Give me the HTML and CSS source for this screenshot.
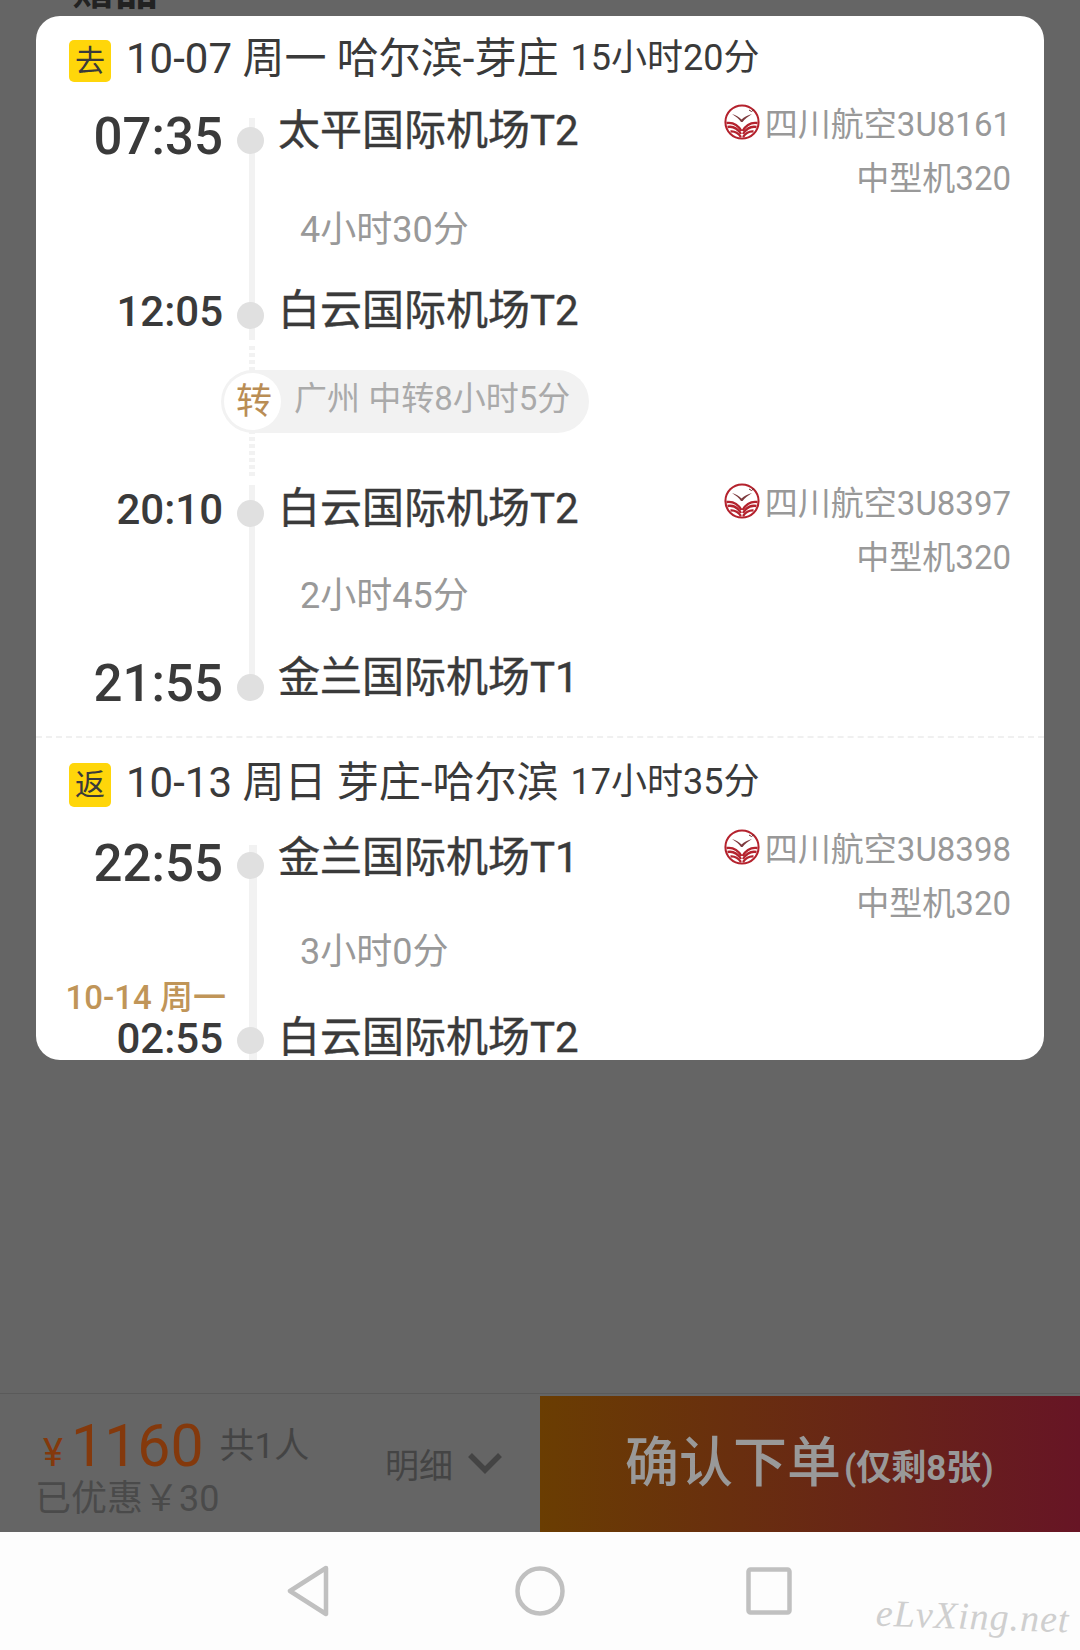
FILE: index.html
```html
<!DOCTYPE html>
<html lang="zh-CN">
<head>
<meta charset="utf-8">
<title>确认订单</title>
<link rel="stylesheet" href="styles.css">
</head>
<body>
<svg class="defs" width="0" height="0" aria-hidden="true">
  <symbol id="sichuan" viewBox="0 0 36 36">
    <circle cx="18" cy="18" r="16.600" fill="#fff" stroke="#b4222d" stroke-width="2"/>
    <g fill="none" stroke="#b4222d" stroke-width="2.300">
      <path d="M2.500 19C9 18 14 21 17.500 27"/>
      <path d="M33.500 19C27 18 22 21 18.500 27"/>
      <path d="M3.500 23C9 22 14 25 17 30"/>
      <path d="M32.500 23C27 22 22 25 19 30"/>
      <path d="M6.500 27.500C11 27 14 29 17 33"/>
      <path d="M29.500 27.500C25 27 22 29 19 33"/>
    </g>
    <path d="M8 10C12 11 15 13 17.500 15.500C20 13 24 11 28 10C24 12.500 21 15 18.500 18L17 18C15 15 12 12.500 8 10Z" fill="#7d3a3e"/>
    <path d="M25 6L27.500 7.500L30 5.500" fill="none" stroke="#6e2a2e" stroke-width="1"/>
  </symbol>
</svg>
<div class="behind"><span class="behind-text">赠品</span></div>

<main class="card">
  <header class="trip-head">
    <span class="trip-badge">去</span>
    <span class="trip-title">10-07 周一 哈尔滨-芽庄</span>
    <span class="trip-total">15小时20分</span>
  </header>

  <section class="leg leg-first">
    <div class="leg-main">
      <div class="stop stop-big"><span class="time">07:35</span><span class="dot"></span><span class="airport">太平国际机场T2</span></div>
      <div class="duration duration-low">4小时30分</div>
      <div class="stop"><span class="time">12:05</span><span class="dot"></span><span class="airport">白云国际机场T2</span></div>
    </div>
    <div class="carrier">
      <div class="carrier-line"><svg class="logo"><use href="#sichuan"/></svg>四川航空3U8161</div>
      <div class="carrier-line">中型机320</div>
    </div>
  </section>

  <div class="transfer">
    <div class="pill"><span class="pill-mark">转</span><span class="pill-text">广州 中转8小时5分</span></div>
  </div>

  <section class="leg leg-second">
    <div class="leg-main">
      <div class="stop"><span class="time">20:10</span><span class="dot"></span><span class="airport">白云国际机场T2</span></div>
      <div class="duration">2小时45分</div>
      <div class="stop stop-big"><span class="time">21:55</span><span class="dot"></span><span class="airport">金兰国际机场T1</span></div>
    </div>
    <div class="carrier">
      <div class="carrier-line"><svg class="logo"><use href="#sichuan"/></svg>四川航空3U8397</div>
      <div class="carrier-line">中型机320</div>
    </div>
  </section>

  <div class="divider"></div>

  <header class="trip-head trip-head-return">
    <span class="trip-badge trip-badge-tall">返</span>
    <span class="trip-title">10-13 周日 芽庄-哈尔滨</span>
    <span class="trip-total">17小时35分</span>
  </header>

  <section class="leg leg-first leg-return">
    <div class="leg-main">
      <div class="stop stop-big"><span class="time">22:55</span><span class="dot"></span><span class="airport">金兰国际机场T1</span></div>
      <div class="duration duration-high">3小时0分</div>
      <div class="stop"><span class="time">02:55<span class="next-day">10-14 周一</span></span><span class="dot"></span><span class="airport">白云国际机场T2</span></div>
    </div>
    <div class="carrier">
      <div class="carrier-line"><svg class="logo"><use href="#sichuan"/></svg>四川航空3U8398</div>
      <div class="carrier-line">中型机320</div>
    </div>
  </section>
</main>

<div class="spacer"></div>

<footer class="order-bar">
  <div class="price-box">
    <div class="price-line"><span class="yen">¥</span><span class="amount">1160</span><span class="people">共1人</span></div>
    <div class="discount">已优惠￥30</div>
  </div>
  <div class="detail">明细
    <svg class="chevron" viewBox="0 0 36 22"><path d="M3 3L18 18L33 3" fill="none" stroke="#444" stroke-width="5.500"/></svg>
  </div>
  <div class="submit"><span class="submit-main">确认下单</span><span class="submit-sub">(仅剩8张)</span></div>
</footer>

<nav class="system-nav">
  <svg class="nav-back" viewBox="0 0 44 52"><path d="M40 3L4 26L40 49Z" fill="none" stroke="#c0c0c0" stroke-width="4.500" stroke-linejoin="round"/></svg>
  <svg class="nav-home" viewBox="0 0 50 50"><circle cx="25" cy="25" r="22.500" fill="none" stroke="#c0c0c0" stroke-width="4.500"/></svg>
  <svg class="nav-recent" viewBox="0 0 46 48"><rect x="2.500" y="2.500" width="41" height="43" rx="2" fill="none" stroke="#c0c0c0" stroke-width="4.500"/></svg>
  <span class="watermark">eLvXing.net</span>
</nav>
</body>
</html>
```

FILE: styles.css
```css
* { box-sizing: border-box; }
html, body { margin: 0; padding: 0; }
body {
  width: 1080px;
  height: 1650px;
  overflow: hidden;
  display: flex;
  flex-direction: column;
  background: #656565;
  color: #3a3a3a;
  font-family: Roboto, "Noto Sans CJK SC", sans-serif;
}
.defs { position: absolute; }

.behind {
  height: 16px;
  flex: none;
  overflow: hidden;
  display: flex;
  align-items: flex-end;
  padding: 0 0 5px 72px;
}
.behind-text { font-size: 43px; line-height: 42px; font-weight: 700; color: #222; }

.card {
  flex: none;
  height: 1044px;
  margin: 0 36px;
  background: #fff;
  border-radius: 24px;
  overflow: hidden;
}

.trip-head {
  display: flex;
  align-items: center;
  height: 42px;
  margin: 24px 0 23px;
  padding-left: 33px;
  white-space: nowrap;
}
.trip-head-return { height: 44px; margin: 25px 0 25px; }
.trip-badge {
  width: 42px;
  height: 42px;
  flex: none;
  display: flex;
  align-items: center;
  justify-content: center;
  margin-right: 15px;
  background: #ffd60a;
  border-radius: 5px;
  font-size: 30px;
  line-height: 1;
}
.trip-badge-tall { height: 44px; }
.trip-title { font-size: 42px; line-height: 42px; padding-bottom: 4px; }
.trip-total { font-size: 36px; line-height: 42px; margin-left: 12px; padding-bottom: 6px; }

.leg { display: flex; justify-content: space-between; padding-right: 33px; }
.leg-main { position: relative; flex: none; width: 560px; }
.leg-main::before {
  content: "";
  position: absolute;
  left: 213px;
  width: 6px;
  top: 7px;
  bottom: 22px;
  background: #f2f2f2;
}
.leg-first .leg-main::before { top: 13px; bottom: 0; }
.leg-return .leg-main::before { width: 8px; }

.stop {
  position: relative;
  display: grid;
  grid-template-columns: 187px 55px 1fr;
  align-items: center;
  height: 60px;
}
.time {
  position: relative;
  margin-top: 2px;
  text-align: right;
  font-size: 42px;
  line-height: 60px;
  font-weight: 500;
  white-space: nowrap;
}
.stop-big .time { font-size: 51px; }
.next-day {
  position: absolute;
  right: -3px;
  top: -31px;
  font-size: 33px;
  line-height: 40px;
  font-weight: 500;
  color: #c09558;
}
.dot {
  width: 27px;
  height: 27px;
  margin: 8px 0 0 14px;
  border-radius: 50%;
  background: #e0e0e0;
}
.leg-return .dot { margin-top: 4px; }
.airport {
  font-size: 42px;
  line-height: 50px;
  margin-top: 0;
  white-space: nowrap;
  -webkit-text-stroke: 0.4px #3a3a3a;
}
.stop-big .airport { margin: 0 0 11px; }

.duration {
  position: relative;
  display: flex;
  align-items: center;
  height: 114px;
  padding: 0 0 6px 264px;
  font-size: 36px;
  color: #999;
}
.duration-low { height: 115px; padding: 6px 0 0 264px; }
.duration-high { height: 115px; padding: 0 0 3px 264px; }

.transfer { position: relative; padding: 30px 0 45px; }
.transfer::before {
  content: "";
  position: absolute;
  left: 213px;
  width: 6px;
  top: 6px;
  bottom: 0;
  background: repeating-linear-gradient(#f2f2f2 0 4px, transparent 4px 7px);
}
.pill {
  position: relative;
  display: inline-flex;
  align-items: center;
  height: 63px;
  margin-left: 185px;
  padding: 0 19px 0 3px;
  border-radius: 32px;
  background: #f2f2f2;
}
.pill-mark {
  width: 57px;
  height: 57px;
  display: flex;
  align-items: center;
  justify-content: center;
  padding-left: 3px;
  margin-right: 13px;
  border-radius: 50%;
  background: #fff;
  color: #b98d55;
  font-size: 36px;
  line-height: 1;
}
.pill-text { font-size: 33px; line-height: 1; padding-bottom: 6px; color: #aaa; white-space: nowrap; }

.carrier { margin-top: -10px; text-align: right; color: #999; }
.leg-second .carrier { margin-top: -4px; }
.leg-return .carrier { margin-top: -12px; }
.carrier-line {
  display: flex;
  align-items: center;
  justify-content: flex-end;
  height: 54px;
  font-size: 33px;
  white-space: nowrap;
}
.logo { width: 36px; height: 36px; margin-right: 5px; }

.divider { margin-top: 24px; border-top: 2px dashed #f0f0f0; height: 0; }

.spacer { flex: 1; }

.order-bar {
  flex: none;
  display: flex;
  height: 139px;
  border-top: 1px solid #5a5a5a;
}
.price-box { width: 346px; padding: 22px 0 0 35px; color: #4a4a4a; }
.price-line { display: flex; align-items: baseline; height: 60px; line-height: 60px; }
.yen { font-size: 38px; color: #84390c; margin: 0 8px 0 8px; }
.amount { font-size: 59px; color: #84390c; }
.people { font-size: 35px; margin-left: 16px; position: relative; top: -8px; color: #444; }
.discount { font-size: 36px; line-height: 46px; margin-top: 0; }
.detail {
  width: 194px;
  display: flex;
  align-items: center;
  gap: 14px;
  padding: 0 0 0 39px;
  font-size: 34px;
  color: #444;
}
.chevron { width: 36px; height: 22px; }
.submit {
  flex: 1;
  margin-top: 2px;
  display: flex;
  align-items: center;
  padding: 0 0 12px 85px;
  background: linear-gradient(90deg, #6a3d02, #671525);
  color: #999;
  white-space: nowrap;
}
.submit-main { font-size: 54px; font-weight: 500; }
.submit-sub { font-size: 35px; font-weight: 700; margin-top: 12px; margin-left: 3px; }

.system-nav {
  position: relative;
  flex: none;
  height: 118px;
  display: flex;
  align-items: center;
  justify-content: flex-start;
  padding-left: 286px;
  background: #fdfdfd;
}
.nav-back { width: 44px; height: 52px; }
.nav-home { width: 50px; height: 50px; margin-left: 185px; }
.nav-recent { width: 46px; height: 48px; margin-left: 181px; }
.watermark {
  position: absolute;
  right: 10px;
  bottom: 12px;
  font-family: "Liberation Serif", serif;
  font-style: italic;
  font-size: 38px;
  letter-spacing: 1px;
  color: #cfcfcf;
  transform: rotate(2deg);
}
```
